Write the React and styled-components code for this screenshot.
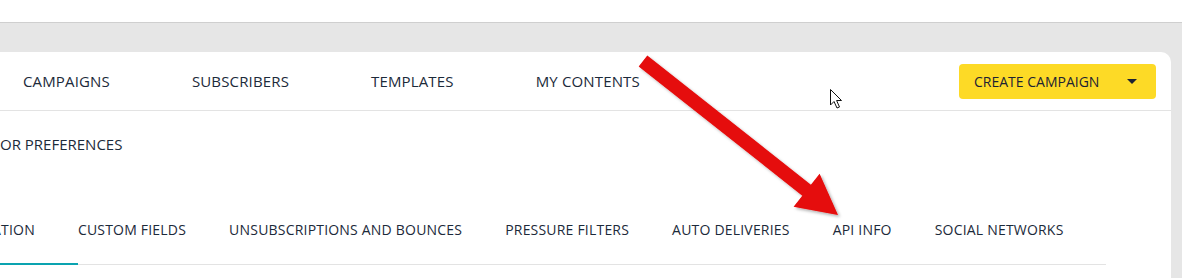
import React from "react";
import styled, { createGlobalStyle } from "styled-components";

const GlobalStyle = createGlobalStyle`
  body {
    margin: 0;
    font-family: "Open Sans", "Liberation Sans", sans-serif;
    background: #fff;
    overflow: hidden;
  }
`;

const navItems = ["CAMPAIGNS", "SUBSCRIBERS", "TEMPLATES", "MY CONTENTS"];

const tabs = [
  { label: "ATION", active: true },
  { label: "CUSTOM FIELDS" },
  { label: "UNSUBSCRIPTIONS AND BOUNCES" },
  { label: "PRESSURE FILTERS" },
  { label: "AUTO DELIVERIES" },
  { label: "API INFO" },
  { label: "SOCIAL NETWORKS" },
];

const Page = () => {
  return (
    <Wrapper>
      <GlobalStyle />
      <TopBar />
      <Backdrop>
        <Card>
          <Nav>
            <NavList>
              {navItems.map((item) => (
                <NavItem key={item}>{item}</NavItem>
              ))}
            </NavList>
            <CreateButton>
              CREATE CAMPAIGN
              <Caret />
            </CreateButton>
          </Nav>
          <Content>
            <SectionTitle>OR PREFERENCES</SectionTitle>
            <TabList>
              {tabs.map((t) => (
                <Tab key={t.label} active={t.active}>
                  {t.label}
                </Tab>
              ))}
            </TabList>
          </Content>
        </Card>
      </Backdrop>

      <Overlay width="1182" height="278" viewBox="0 0 1182 278">
        <defs>
          <filter id="shadow" x="-10%" y="-10%" width="120%" height="120%">
            <feDropShadow dx="2" dy="2" stdDeviation="1.5" floodColor="#000" floodOpacity="0.3" />
          </filter>
        </defs>
        <polygon
          points="647.3,55.5 810.9,184.7 819.6,173.7 838,215 793.6,206.7 802.3,195.7 638.7,66.5"
          fill="#e50808"
          filter="url(#shadow)"
        />
        <path
          d="M830.5 89.5 L830.5 105 L834 101.5 L837 108 L839.5 107 L836.6 100.5 L841.5 100.5 Z"
          fill="#fff"
          stroke="#111"
          strokeWidth="1"
          strokeLinejoin="round"
        />
      </Overlay>
    </Wrapper>
  );
};

export default function App() {
  return <Page />;
}

const Wrapper = styled.div`
  position: relative;
  width: 1182px;
  height: 278px;
  overflow: hidden;
`;

const TopBar = styled.div`
  height: 22px;
  background: #fff;
  border-bottom: 1px solid #cfcfcf;
`;

const Backdrop = styled.div`
  background: #e6e6e6;
  padding: 29px 11px 0 0;
  height: 260px;
  box-sizing: border-box;
`;

const Card = styled.div`
  background: #fff;
  border-top-right-radius: 10px;
  height: 100%;
`;

const Nav = styled.div`
  display: flex;
  align-items: center;
  justify-content: space-between;
  height: 59px;
  box-sizing: border-box;
  border-bottom: 1px solid #e3e3e3;
  padding: 0 15px 0 23px;
`;

const NavList = styled.div`
  display: flex;
  gap: 82px;
`;

const NavItem = styled.span`
  font-size: 15px;
  letter-spacing: 0.15px;
  line-height: 20px;
  color: #1c2a3a;
  white-space: nowrap;
`;

const CreateButton = styled.button`
  display: flex;
  align-items: center;
  justify-content: space-between;
  width: 197px;
  height: 35px;
  padding: 0 19px 0 15px;
  box-sizing: border-box;
  border: none;
  border-radius: 4px;
  background: #fdda26;
  font-family: inherit;
  font-size: 14px;
  color: #1c2233;
`;

const Caret = styled.span`
  width: 0;
  height: 0;
  border-left: 5px solid transparent;
  border-right: 5px solid transparent;
  border-top: 5px solid #1c2233;
`;

const Content = styled.div`
  padding: 23px 65px 0 0;
`;

const SectionTitle = styled.div`
  font-size: 15px;
  line-height: 20px;
  color: #1c2a3a;
`;

const TabList = styled.div`
  display: flex;
  margin: 66px 0 0 -8px;
  border-bottom: 1px solid #e3e3e3;
`;

const Tab = styled.div`
  flex-shrink: 0;
  white-space: nowrap;
  font-size: 14px;
  letter-spacing: 0.2px;
  line-height: 20px;
  color: #1c2a3a;
  padding: 0 43px 23px 0;
  margin-bottom: -1px;
  border-bottom: 2px solid ${(p) => (p.active ? "#0aa3b0" : "transparent")};
`;

const Overlay = styled.svg`
  position: absolute;
  top: 0;
  left: 0;
  pointer-events: none;
`;
